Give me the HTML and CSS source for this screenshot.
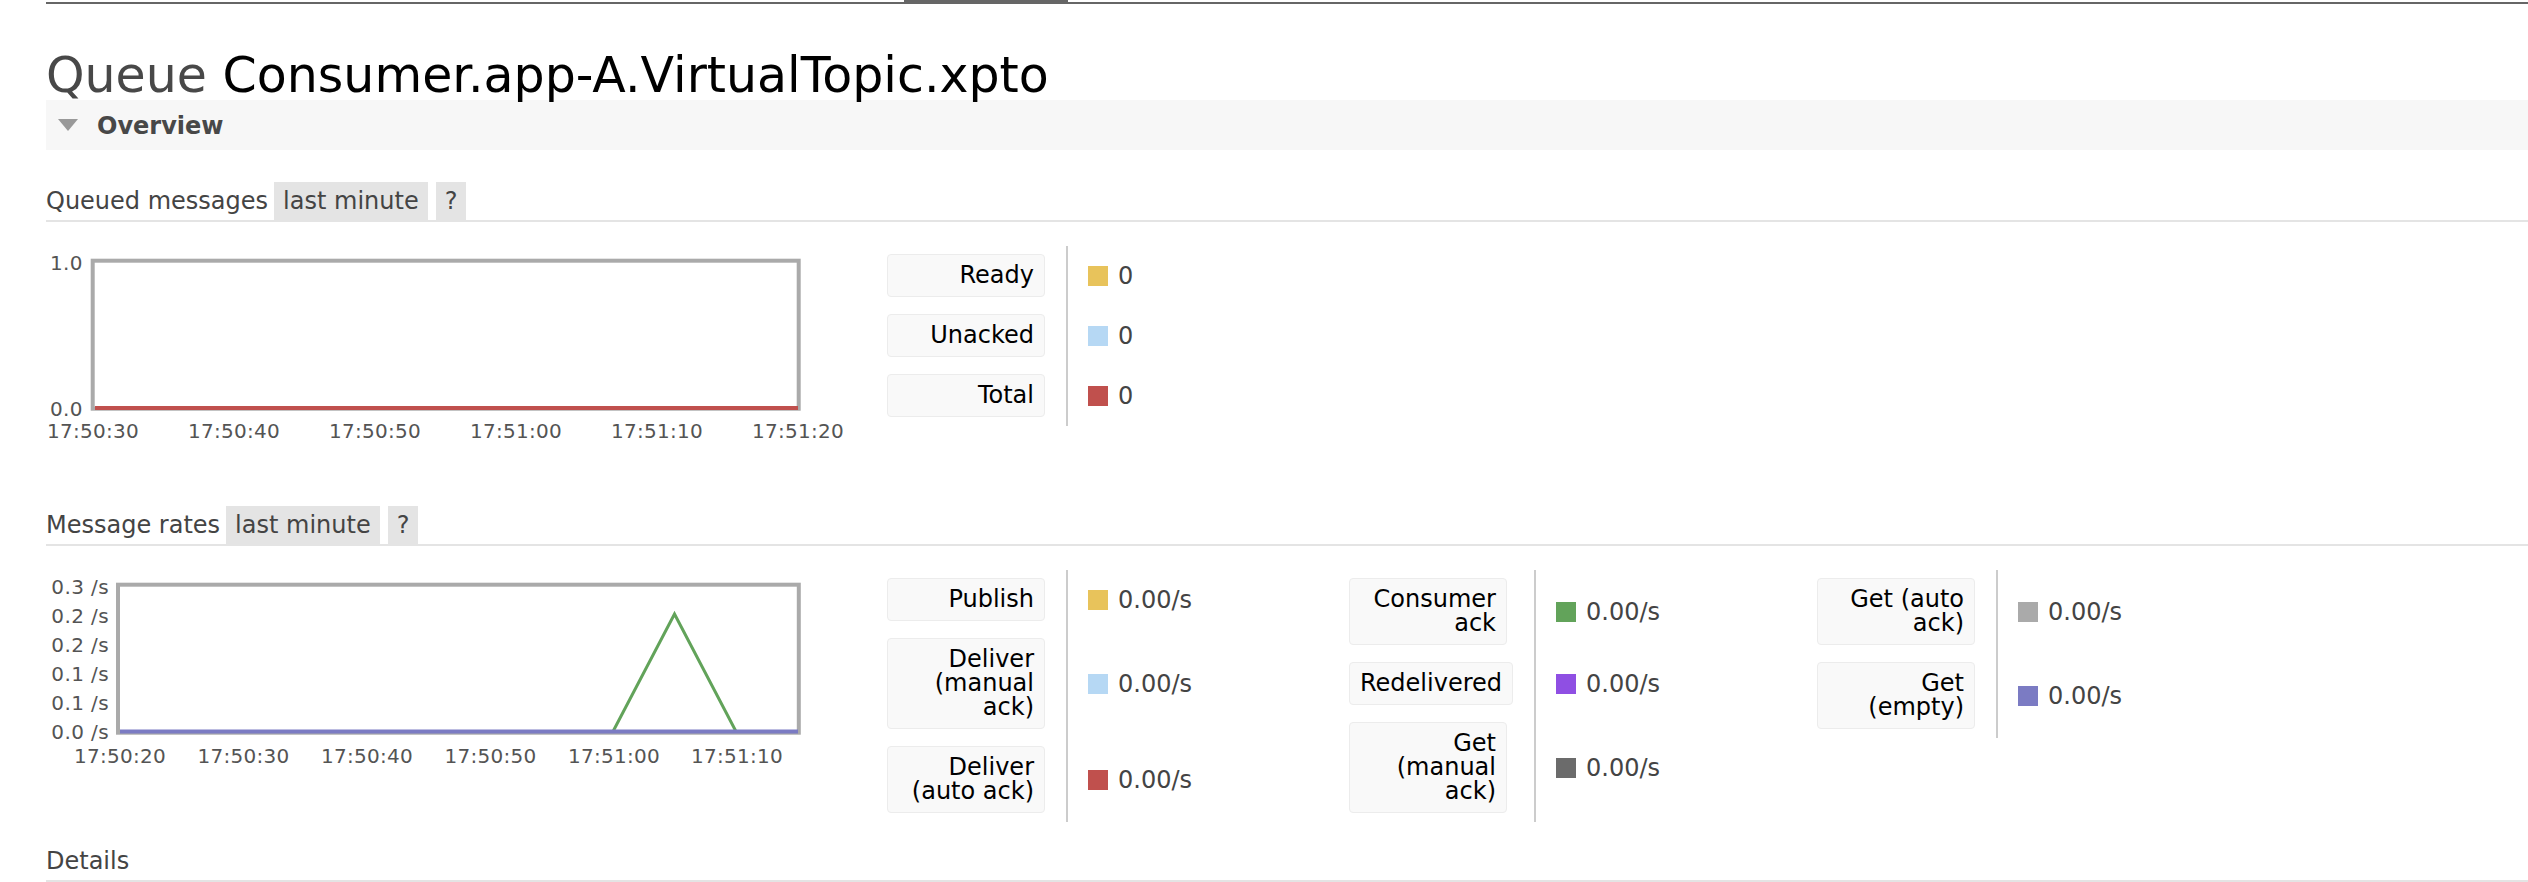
FILE: index.html
```html
<!DOCTYPE html>
<html>
<head>
<meta charset="utf-8">
<title>Queue Consumer.app-A.VirtualTopic.xpto</title>
<link rel="stylesheet" href="styles.css">
</head>
<body>
<div class="page">
  <div class="topbar"><span class="seg seg-a"></span><span class="tab"></span><span class="seg seg-b"></span></div>

  <h1><span class="kind">Queue</span> <b>Consumer.app-A.VirtualTopic.xpto</b></h1>

  <div class="section-head"><span class="tri"></span><h2>Overview</h2></div>

  <h3 class="sub"><span class="title">Queued messages</span><span class="pill first">last minute</span><span class="pill help">?</span></h3>
  <div class="chart-row">
    <svg class="chart chart-q" width="841" height="240" viewBox="0 0 841 240">
      <g class="ylab" text-anchor="end">
        <text x="37" y="24">1.0</text>
        <text x="37" y="170">0.0</text>
      </g>
      <rect class="frame" x="46.7" y="14.7" width="706" height="148"/>
      <line class="ln ln-red" x1="49" y1="162" x2="752" y2="162"/>
      <g class="xlab" text-anchor="middle">
        <text x="47" y="192">17:50:30</text>
        <text x="188" y="192">17:50:40</text>
        <text x="329" y="192">17:50:50</text>
        <text x="470" y="192">17:51:00</text>
        <text x="611" y="192">17:51:10</text>
        <text x="752" y="192">17:51:20</text>
      </g>
    </svg>
    <div class="legend">
      <div class="group">
        <div class="lab"><div class="box">Ready</div></div>
        <div class="val"><i class="sw c-yellow"></i>0</div>
        <div class="lab"><div class="box">Unacked</div></div>
        <div class="val"><i class="sw c-lblue"></i>0</div>
        <div class="lab"><div class="box">Total</div></div>
        <div class="val"><i class="sw c-red"></i>0</div>
      </div>
    </div>
  </div>

  <h3 class="sub"><span class="title">Message rates</span><span class="pill first">last minute</span><span class="pill help">?</span></h3>
  <div class="chart-row">
    <svg class="chart chart-m" width="841" height="200" viewBox="0 0 841 200">
      <g class="grid">
        <line x1="74" y1="45.5" x2="751" y2="45.5"/>
        <line x1="74" y1="74.5" x2="751" y2="74.5"/>
        <line x1="74" y1="103.5" x2="751" y2="103.5"/>
        <line x1="74" y1="132.5" x2="751" y2="132.5"/>
      </g>
      <g class="ylab" text-anchor="end">
        <text x="63" y="23.5">0.3 /s</text>
        <text x="63" y="53">0.2 /s</text>
        <text x="63" y="81.5">0.2 /s</text>
        <text x="63" y="111">0.1 /s</text>
        <text x="63" y="139.5">0.1 /s</text>
        <text x="63" y="169">0.0 /s</text>
      </g>
      <rect class="frame" x="72" y="14.7" width="680.8" height="148"/>
      <polyline class="ln ln-green" points="74,161.5 567,161.5 628.5,44 690,161.5 752,161.5"/>
      <line class="ln ln-slate" x1="74" y1="161.5" x2="752" y2="161.5"/>
      <g class="xlab" text-anchor="middle">
        <text x="74" y="193">17:50:20</text>
        <text x="197.5" y="193">17:50:30</text>
        <text x="321" y="193">17:50:40</text>
        <text x="444.5" y="193">17:50:50</text>
        <text x="568" y="193">17:51:00</text>
        <text x="691" y="193">17:51:10</text>
      </g>
    </svg>
    <div class="legend">
      <div class="group">
        <div class="lab"><div class="box">Publish</div></div>
        <div class="val"><i class="sw c-yellow"></i>0.00/s</div>
        <div class="lab"><div class="box">Deliver (manual ack)</div></div>
        <div class="val"><i class="sw c-lblue"></i>0.00/s</div>
        <div class="lab"><div class="box">Deliver (auto ack)</div></div>
        <div class="val"><i class="sw c-red"></i>0.00/s</div>
      </div>
      <div class="group">
        <div class="lab"><div class="box">Consumer ack</div></div>
        <div class="val"><i class="sw c-green"></i>0.00/s</div>
        <div class="lab"><div class="box">Redelivered</div></div>
        <div class="val"><i class="sw c-purple"></i>0.00/s</div>
        <div class="lab"><div class="box">Get (manual ack)</div></div>
        <div class="val"><i class="sw c-dgray"></i>0.00/s</div>
      </div>
      <div class="group">
        <div class="lab"><div class="box">Get (auto ack)</div></div>
        <div class="val"><i class="sw c-gray"></i>0.00/s</div>
        <div class="lab"><div class="box">Get (empty)</div></div>
        <div class="val"><i class="sw c-slate"></i>0.00/s</div>
      </div>
    </div>
  </div>

  <h3 class="sub"><span class="title">Details</span></h3>
</div>
</body>
</html>
```

FILE: styles.css
```css
* { box-sizing: border-box; }

html { overflow: hidden; }

body {
  margin: 0;
  background: #ffffff;
  font-family: "DejaVu Sans", Verdana, sans-serif;
  font-size: 24px;
  color: #444444;
}

.page {
  margin-left: 46px;
}

/* top navigation edge */
.topbar {
  display: flex;
  align-items: flex-end;
  height: 4px;
}
.topbar .seg { height: 2px; background: #666666; }
.topbar .seg-a { width: 858px; }
.topbar .seg-b { flex: 1; }
.topbar .tab { width: 164px; height: 4px; background: #666666; }

h1 {
  margin: 48px 0 0 0;
  font-size: 49px;
  line-height: 48px;
  font-weight: normal;
  color: #484848;
  white-space: nowrap;
}
h1 b { font-weight: normal; color: #000000; }

.section-head {
  display: flex;
  align-items: center;
  height: 50px;
  padding-left: 12px;
  background: #f7f7f7;
  margin-bottom: 32px;
}
.section-head .tri {
  width: 0;
  height: 0;
  border-left: 10px solid transparent;
  border-right: 10px solid transparent;
  border-top: 12px solid #999999;
  margin-right: 19px;
}
.section-head h2 {
  margin: 0;
  font-size: 24px;
  line-height: 28px;
  font-weight: bold;
  color: #484848;
  padding-top: 2px;
}

h3.sub {
  display: flex;
  align-items: flex-end;
  margin: 0;
  font-size: 24px;
  line-height: 28px;
  font-weight: normal;
  color: #444444;
  border-bottom: 2px solid #e4e4e4;
}
h3.sub .title { padding: 5px 0; }
h3.sub .pill {
  padding: 5px 9px;
  background: #e4e4e4;
  margin-left: 8px;
}
h3.sub .pill.first { margin-left: 6px; }
h3.sub .pill.help { padding: 5px 9px; }

.chart-row {
  display: flex;
  align-items: flex-start;
  margin: 24px 0 20px 0;
}

.chart { display: block; flex: none; }

.chart text {
  font-family: "DejaVu Sans", Verdana, sans-serif;
  font-size: 20px;
  fill: #545454;
}
.chart .xlab text { letter-spacing: 0.3px; }
.chart .ylab text { letter-spacing: 0.4px; }

.chart .frame { fill: #ffffff; stroke: #aaaaaa; stroke-width: 4; }
.chart .grid line { stroke: #ececec; stroke-width: 2; }
.chart .ln { fill: none; stroke-width: 4; }
.chart .ln-red { stroke: #c0504d; }
.chart .ln-green { stroke: #62a35a; stroke-width: 3; stroke-linejoin: miter; }
.chart .ln-slate { stroke: #7b7bc3; }

/* legend */
.legend {
  display: flex;
  align-items: flex-start;
}
.group {
  display: grid;
  grid-template-columns: auto 283px;
}
.lab {
  padding: 8px 21px 9px 0;
}
.box {
  width: 158px;
  min-width: min-content;
  padding: 8px 10px 9px 10px;
  border: 1px solid #ececec;
  border-radius: 4px;
  background: #f9f9f9;
  color: #000000;
  font-size: 24px;
  line-height: 24px;
  text-align: right;
}
.val {
  display: flex;
  align-items: center;
  border-left: 2px solid #cccccc;
  padding-left: 20px;
  color: #444444;
  font-size: 24px;
  white-space: nowrap;
}
.sw {
  display: inline-block;
  width: 20px;
  height: 20px;
  margin-right: 10px;
  flex: none;
}
.c-yellow { background: #e8c35b; }
.c-lblue { background: #b6d8f4; }
.c-red { background: #c0504d; }
.c-green { background: #62a35a; }
.c-purple { background: #8f4fe3; }
.c-dgray { background: #6b6b6b; }
.c-gray { background: #aaaaaa; }
.c-slate { background: #7b7bc3; }
```
